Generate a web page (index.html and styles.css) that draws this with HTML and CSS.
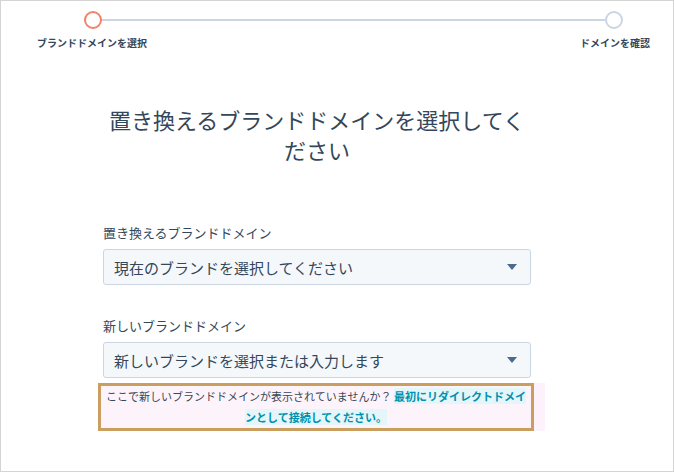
FILE: index.html
```html
<!DOCTYPE html>
<html lang="ja">
<head>
<meta charset="utf-8">
<title>ブランドドメインを選択</title>
<link rel="stylesheet" href="styles.css">
</head>
<body>
<div class="page">
  <div class="stepper">
    <div class="track">
      <span class="dot dot-active"></span>
      <span class="line"></span>
      <span class="dot"></span>
    </div>
    <div class="step-labels">
      <span>ブランドドメインを選択</span>
      <span>ドメインを確認</span>
    </div>
  </div>
  <div class="content">
    <h1 class="title">置き換えるブランドドメインを選択してください</h1>
    <div class="field">
      <label class="field-label">置き換えるブランドドメイン</label>
      <div class="select">
        <span class="select-text">現在のブランドを選択してください</span>
        <span class="caret"></span>
      </div>
    </div>
    <div class="field field-second">
      <label class="field-label">新しいブランドドメイン</label>
      <div class="select">
        <span class="select-text">新しいブランドを選択または入力します</span>
        <span class="caret"></span>
      </div>
    </div>
    <div class="notice-wrap">
      <div class="notice">ここで新しいブランドドメインが表示されていませんか？ <a class="notice-link">最初にリダイレクトドメインとして接続してください。</a></div>
    </div>
  </div>
</div>
</body>
</html>
```
FILE: styles.css
```css
* { box-sizing: border-box; }
html, body { margin: 0; padding: 0; background: #fff; }
body {
  font-family: "Noto Sans CJK JP", "Noto Sans", sans-serif;
  color: #33475b;
}
.page {
  width: 674px;
  height: 472px;
  border: 1px solid #d4d4d4;
  overflow: hidden;
}
.stepper {
  margin-left: 36px;
  width: 613px;
  padding-top: 10px;
}
.track {
  display: flex;
  align-items: center;
  padding-left: 47px;
  padding-right: 27px;
}
.dot {
  width: 18px;
  height: 18px;
  border-radius: 50%;
  border: 2px solid #cbd6e2;
  flex: none;
}
.dot-active { border-color: #f2836b; }
.line {
  flex: 1;
  height: 2px;
  background: #cbd6e2;
}
.step-labels {
  display: flex;
  justify-content: space-between;
  margin-top: 7px;
  font-size: 10px;
  line-height: 14px;
  font-weight: 700;
  color: #33475b;
}
.content {
  margin-left: 102px;
  width: 428px;
}
.title {
  margin: 54px 0 0;
  font-size: 22px;
  line-height: 30px;
  font-weight: 400;
  text-align: center;
  color: #33475b;
}
.field { margin-top: 60px; }
.field-second { margin-top: 32px; }
.field-label {
  display: block;
  font-size: 13px;
  line-height: 18px;
  margin-bottom: 7px;
}
.select {
  height: 36px;
  display: flex;
  align-items: center;
  justify-content: space-between;
  padding: 0 13px 0 10px;
  background: #f5f8fa;
  border: 1px solid #cbd6e2;
  border-radius: 3px;
  font-size: 15px;
}
.caret {
  width: 0;
  height: 0;
  border-left: 5px solid transparent;
  border-right: 5px solid transparent;
  border-top: 6px solid #4a6a8e;
}
.notice-wrap {
  margin: 5px -14px 0 -5px;
  padding-right: 11px;
  background: #fdf1fb;
}
.notice {
  border: 3px solid #c99e5e;
  background: #fdf4fb;
  font-size: 11px;
  line-height: 21px;
  text-align: center;
  color: #3a4756;
  padding: 0 1px;
}
.notice-link {
  color: #0091ae;
  font-weight: 700;
  background: #e4f6fa;
}
```
